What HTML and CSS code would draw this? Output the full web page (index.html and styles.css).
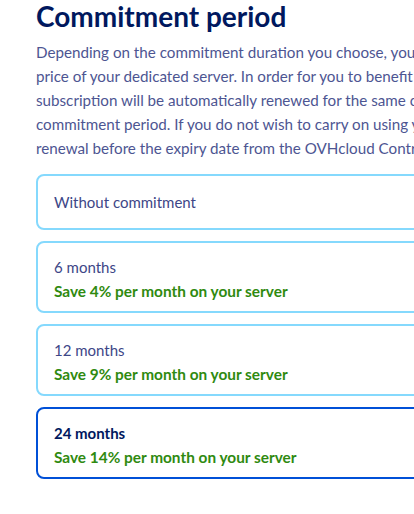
FILE: index.html
```html
<!DOCTYPE html>
<html lang="en">
<head>
    <meta charset="UTF-8">
    <meta name="viewport" content="width=device-width, initial-scale=1.0">
    <title>Commitment period</title>
    <link rel="stylesheet" href="styles.css">
</head>
<body>

<div class="section">
    <h1>Commitment period</h1>
    <p class="intro">
        <span>Depending on the commitment duration you choose, you will benefit from a discount on the</span>
        <span>price of your dedicated server. In order for you to benefit from this discount, your</span>
        <span>subscription will be automatically renewed for the same commitment period at the end of the</span>
        <span>commitment period. If you do not wish to carry on using your server, you can cancel the</span>
        <span>renewal before the expiry date from the OVHcloud Control Panel.</span>
    </p>

    <div class="options">
        <div class="option option-single">
            <div class="label">Without commitment</div>
        </div>
        <div class="option">
            <div class="label">6 months</div>
            <div class="saving">Save 4% per month on your server</div>
        </div>
        <div class="option">
            <div class="label">12 months</div>
            <div class="saving">Save 9% per month on your server</div>
        </div>
        <div class="option selected">
            <div class="label">24 months</div>
            <div class="saving">Save 14% per month on your server</div>
        </div>
    </div>
</div>

</body>
</html>
```

FILE: styles.css
```css
html, body {
    margin: 0;
    overflow: hidden;
}
body {
    font-family: Lato, "Open Sans", sans-serif;
    background-color: #fff;
    color: #4d5592;
}
.section {
    padding-left: 36px;
    width: 460px;
}
h1 {
    margin: -2px 0 0 0;
    font-size: 28px;
    line-height: 36px;
    font-weight: 700;
    color: #00185e;
}
.intro {
    margin: 6px 0 0 0;
    font-size: 15.2px;
    line-height: 24px;
    color: #4d5592;
}
.intro span {
    display: block;
    white-space: nowrap;
}
.options {
    margin-top: 14px;
    display: flex;
    flex-direction: column;
    gap: 11px;
}
.option {
    border: 2px solid #85d9fd;
    border-radius: 8px;
    padding: 12px 16px 8px 16px;
    height: 72px;
    box-sizing: border-box;
    font-size: 15px;
    line-height: 24px;
}
.option-single {
    height: 56px;
    padding-top: 14px;
    padding-bottom: 14px;
}
.label {
    color: #3d4687;
}
.saving {
    color: #2f8a10;
    font-weight: 700;
    font-size: 15.4px;
}
.selected {
    border-color: #0050d7;
}
.selected .label {
    color: #00185e;
    font-weight: 700;
}
```
